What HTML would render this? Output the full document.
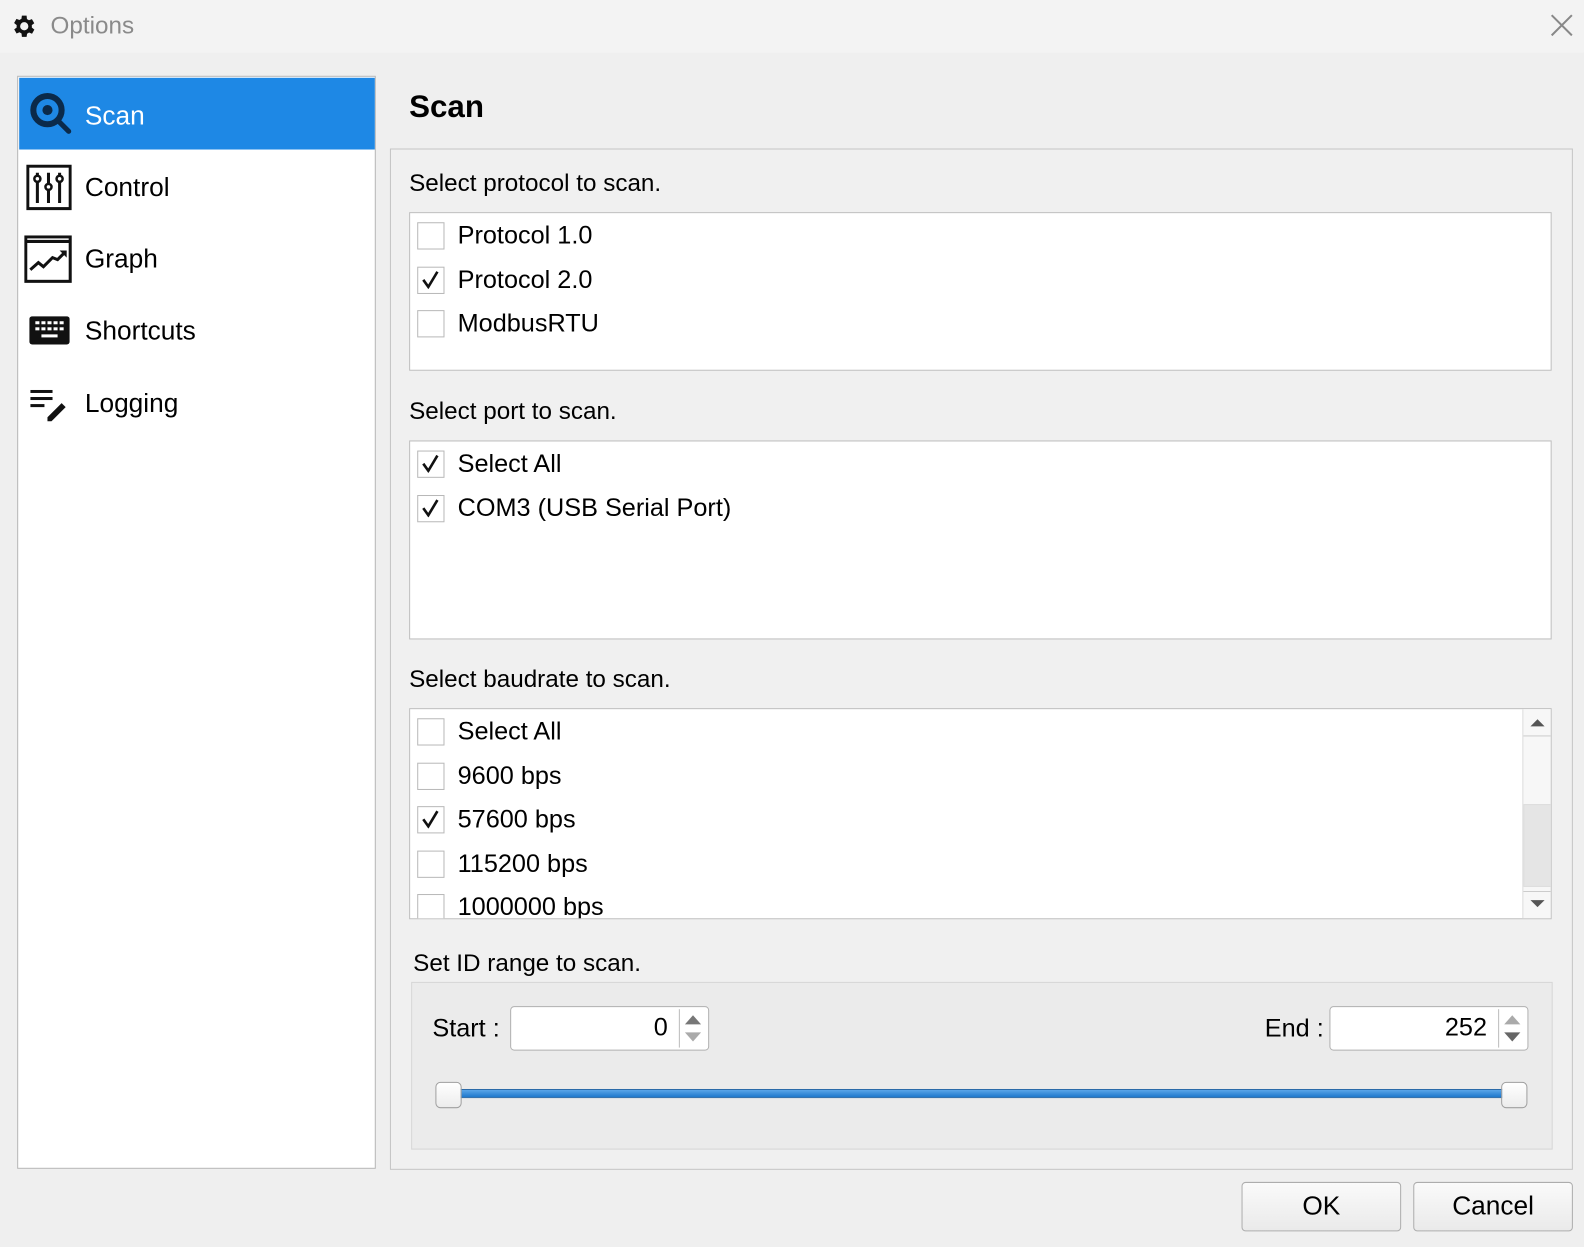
<!DOCTYPE html>
<html><head><meta charset="utf-8"><style>
*{box-sizing:border-box;margin:0;padding:0}
html,body{width:1584px;height:1246px;overflow:hidden;background:#efefef;font-family:"Liberation Sans",Arial,sans-serif;color:#000}
#w{position:absolute;left:0;top:0;width:1568px;height:1234px;transform:scale(1.0102);transform-origin:0 0}
.a{position:absolute}
.t{position:absolute;font-size:25px;line-height:30px;white-space:nowrap}
.box{position:absolute;background:#fff;border:1px solid #bdbdbd}
.cb{position:absolute;width:27px;height:27px;border:1.5px solid #b8b8b8;background:#fff}
.cb svg{position:absolute;left:3px;top:3px}
.btn{position:absolute;border:1.5px solid #adadad;border-radius:4px;background:linear-gradient(#fafafa,#eaeaea);font-size:26px;text-align:center;line-height:45px}
.spin{position:absolute;border:1.5px solid #b0b0b0;border-radius:4px;background:#fff;height:44px}
.spin .v{position:absolute;right:40px;top:6px;font-size:25px}
.spin .d{position:absolute;right:28px;top:2px;bottom:2px;width:1px;background:#bbb}
.up{position:absolute;right:7px;top:8px;width:0;height:0;border-left:8px solid transparent;border-right:8px solid transparent;border-bottom:9px solid #777}
.dn{position:absolute;right:7px;top:25px;width:0;height:0;border-left:8px solid transparent;border-right:8px solid transparent;border-top:9px solid #aaa}
.h{position:absolute;width:26px;height:26px;border:1.5px solid #a0a0a0;border-radius:5px;background:linear-gradient(#fff,#ececec)}
</style></head><body><div id="w">
<!-- title bar -->
<div class="a" style="left:0;top:0;width:1568px;height:52px;background:#f3f3f3"></div>
<svg class="a" style="left:10px;top:12px" width="28" height="28" viewBox="0 0 24 24"><path fill="#111" d="M19.4 13a7.5 7.5 0 000-2l2.1-1.6-2-3.5-2.5 1a7.6 7.6 0 00-1.7-1L15 3h-4l-.4 2.7a7.6 7.6 0 00-1.7 1l-2.5-1-2 3.5L6.6 11a7.5 7.5 0 000 2l-2.1 1.6 2 3.5 2.5-1a7.6 7.6 0 001.7 1L11 21h4l.4-2.7a7.6 7.6 0 001.7-1l2.5 1 2-3.5zM13 15.5a3.5 3.5 0 110-7 3.5 3.5 0 010 7z" transform="translate(-1 0)"/></svg>
<div class="t" style="left:50px;top:11px;font-size:24px;color:#8a8a8a">Options</div>
<svg class="a" style="left:1535px;top:14px" width="22" height="22"><path d="M1 1L21 21M21 1L1 21" stroke="#888" stroke-width="2"/></svg>

<!-- sidebar -->
<div class="box" style="left:17px;top:75px;width:355px;height:1082px;border-color:#b4b4b4"></div>
<div class="a" style="left:19px;top:77px;width:352px;height:71px;background:#1e88e5"></div>
<svg class="a" style="left:28px;top:90px" width="44" height="44" viewBox="0 0 44 44"><circle cx="19" cy="19" r="14" fill="none" stroke="#0b2a4a" stroke-width="6"/><circle cx="19" cy="19" r="5" fill="#0b2a4a"/><path d="M29 29L40 40" stroke="#0b2a4a" stroke-width="5" stroke-linecap="round"/></svg>
<div class="t" style="left:84px;top:99px;font-size:26px;color:#fff">Scan</div>

<svg class="a" style="left:26px;top:163px" width="45" height="46" viewBox="0 0 45 46"><rect x="1.5" y="1.5" width="42" height="42" fill="none" stroke="#111" stroke-width="3"/><g stroke="#111" stroke-width="3"><path d="M11 8V38M22 8V38M33 8V38"/></g><g fill="#fff" stroke="#111" stroke-width="2.5"><circle cx="11" cy="14" r="3"/><circle cx="22" cy="22" r="3"/><circle cx="33" cy="14" r="3"/></g></svg>
<div class="t" style="left:84px;top:170px;font-size:26px">Control</div>

<svg class="a" style="left:24px;top:233px" width="48" height="48" viewBox="0 0 48 48"><rect x="1.5" y="1.5" width="44" height="44" fill="none" stroke="#111" stroke-width="3"/><path d="M2 6H46" stroke="#111" stroke-width="3"/><path d="M6 34L14 27L19 31L28 22L33 24L40 17" fill="none" stroke="#111" stroke-width="3"/><path d="M35 15H42V22Z" fill="#111"/></svg>
<div class="t" style="left:84px;top:241px;font-size:26px">Graph</div>

<svg class="a" style="left:29px;top:313px" width="40" height="28" viewBox="0 0 40 28"><rect x="0" y="0" width="40" height="28" rx="3" fill="#111"/><g fill="#fff"><rect x="6" y="5" width="4" height="3"/><rect x="12" y="5" width="4" height="3"/><rect x="18" y="5" width="4" height="3"/><rect x="24" y="5" width="4" height="3"/><rect x="30" y="5" width="4" height="3"/><rect x="6" y="11" width="4" height="3"/><rect x="12" y="11" width="4" height="3"/><rect x="18" y="11" width="4" height="3"/><rect x="24" y="11" width="4" height="3"/><rect x="30" y="11" width="4" height="3"/><rect x="12" y="18" width="16" height="3"/></g></svg>
<div class="t" style="left:84px;top:312px;font-size:26px">Shortcuts</div>

<svg class="a" style="left:30px;top:386px" width="38" height="32" viewBox="0 0 38 32"><g fill="#111"><rect x="0" y="0" width="22" height="3"/><rect x="0" y="7" width="22" height="3"/><rect x="0" y="14" width="14" height="3"/><path d="M17 27L31 13L35 17L21 31H17Z"/></g></svg>
<div class="t" style="left:84px;top:384px;font-size:26px">Logging</div>

<!-- heading -->
<div class="t" style="left:405px;top:88px;font-size:31px;font-weight:bold;line-height:36px">Scan</div>

<!-- main panel -->
<div class="a" style="left:386px;top:147px;width:1171px;height:1011px;border:1px solid #c4c4c4;background:#f0f0f0"></div>

<div class="t" style="left:405px;top:167px;font-size:24px">Select protocol to scan.</div>
<div class="box" style="left:405px;top:210px;width:1131px;height:157px"></div>
<div class="cb" style="left:413px;top:220px"></div><div class="t" style="left:453px;top:218px">Protocol 1.0</div>
<div class="cb" style="left:413px;top:264px"><svg width="18" height="18"><path d="M2 9L7 16L16 1" fill="none" stroke="#111" stroke-width="2.6"/></svg></div><div class="t" style="left:453px;top:262px">Protocol 2.0</div>
<div class="cb" style="left:413px;top:307px"></div><div class="t" style="left:453px;top:305px">ModbusRTU</div>

<div class="t" style="left:405px;top:393px;font-size:24px">Select port to scan.</div>
<div class="box" style="left:405px;top:436px;width:1131px;height:197px"></div>
<div class="cb" style="left:413px;top:446px"><svg width="18" height="18"><path d="M2 9L7 16L16 1" fill="none" stroke="#111" stroke-width="2.6"/></svg></div><div class="t" style="left:453px;top:444px">Select All</div>
<div class="cb" style="left:413px;top:490px"><svg width="18" height="18"><path d="M2 9L7 16L16 1" fill="none" stroke="#111" stroke-width="2.6"/></svg></div><div class="t" style="left:453px;top:488px">COM3 (USB Serial Port)</div>

<div class="t" style="left:405px;top:658px;font-size:24px">Select baudrate to scan.</div>
<div class="box" style="left:405px;top:701px;width:1131px;height:209px;overflow:hidden">
 <div class="cb" style="left:7px;top:9px"></div><div class="t" style="left:47px;top:7px">Select All</div>
 <div class="cb" style="left:7px;top:53px"></div><div class="t" style="left:47px;top:51px">9600 bps</div>
 <div class="cb" style="left:7px;top:96px"><svg width="18" height="18"><path d="M2 9L7 16L16 1" fill="none" stroke="#111" stroke-width="2.6"/></svg></div><div class="t" style="left:47px;top:94px">57600 bps</div>
 <div class="cb" style="left:7px;top:140px"></div><div class="t" style="left:47px;top:138px">115200 bps</div>
 <div class="cb" style="left:7px;top:183px"></div><div class="t" style="left:47px;top:181px">1000000 bps</div>
 <div class="a" style="left:1101px;top:0;width:29px;height:207px;background:#f7f7f7;border-left:1px solid #ddd">
  <div class="a" style="left:7px;top:10px;border-left:7px solid transparent;border-right:7px solid transparent;border-bottom:7px solid #555"></div>
  <div class="a" style="left:0;top:26px;width:28px;height:1px;background:#ccc"></div>
  <div class="a" style="left:0;top:94px;width:28px;height:82px;background:#e5e5e5;border:1px solid #ddd"></div>
  <div class="a" style="left:0;top:180px;width:28px;height:1px;background:#ccc"></div>
  <div class="a" style="left:7px;top:189px;border-left:7px solid transparent;border-right:7px solid transparent;border-top:7px solid #555"></div>
 </div>
</div>

<div class="t" style="left:409px;top:939px;font-size:24px">Set ID range to scan.</div>
<div class="a" style="left:407px;top:972px;width:1130px;height:166px;background:#ebebeb;border:1px solid #d6d6d6"></div>
<div class="t" style="left:428px;top:1003px">Start :</div>
<div class="spin" style="left:505px;top:996px;width:197px"><div class="v">0</div><div class="d"></div><div class="up"></div><div class="dn"></div></div>
<div class="t" style="left:1252px;top:1003px">End :</div>
<div class="spin" style="left:1316px;top:996px;width:197px"><div class="v">252</div><div class="d"></div><div class="up" style="border-bottom-color:#aaa"></div><div class="dn" style="border-top-color:#666"></div></div>
<div class="a" style="left:445px;top:1078px;width:1050px;height:9px;background:linear-gradient(#5aa5e8,#1e78cc);border:1px solid #2a6aa8"></div>
<div class="h" style="left:431px;top:1071px"></div>
<div class="h" style="left:1486px;top:1071px"></div>

<div class="btn" style="left:1229px;top:1170px;width:158px;height:49px">OK</div>
<div class="btn" style="left:1399px;top:1170px;width:158px;height:49px">Cancel</div>
</div></body></html>
